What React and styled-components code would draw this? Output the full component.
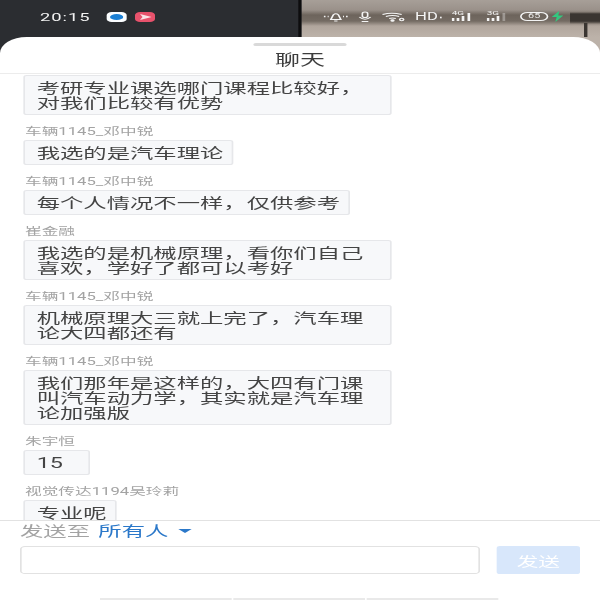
import styled, { createGlobalStyle } from "styled-components";

const GlobalStyle = createGlobalStyle`
  html, body {
    margin: 0;
    padding: 0;
    background: #fff;
    overflow: hidden;
  }
  * {
    box-sizing: border-box;
  }
`;

// the whole screenshot is a 360 wide phone screen stretched to 600
const Phone = styled.div`
  width: 360px;
  height: 600px;
  display: flex;
  flex-direction: column;
  transform: scaleX(1.6667);
  transform-origin: 0 0;
  filter: blur(0.4px);
  background: #2b2d31;
  font-family: "Roboto", "Noto Sans CJK SC", sans-serif;
  overflow: hidden;
`;

const StatusBar = styled.header`
  display: grid;
  grid-template-columns: 179px 2px 1fr;
  height: 53px;
  margin-bottom: -16px;
  flex: none;
`;

const StatusLeft = styled.div`
  display: flex;
  align-items: flex-start;
  padding: 11px 0 0 24px;
  background: #2b2d31;
  color: #f2f2f2;
`;

const Time = styled.span`
  font-size: 11px;
  line-height: 13px;
  letter-spacing: 0.6px;
  width: 40px;
`;

const AppBadge = styled.span`
  width: 12px;
  height: 10px;
  margin-top: 1px;
  margin-right: 5px;
  border-radius: 3px;
  background: ${(p) => p.$bg};
  display: flex;
  align-items: center;
  justify-content: center;
`;

const Divider = styled.div`
  background: #0d0d0e;
`;

const StatusRight = styled.div`
  display: flex;
  align-items: flex-start;
  gap: 6px;
  padding: 11px 0 0 13px;
  color: #f4f4f4;
  background:
    linear-gradient(90deg, transparent 0 46%, #3a3531 48% 56%, transparent 60%) right 23px / 18px 14px no-repeat,
    linear-gradient(180deg, transparent 0 12px, #3a3531 14px 21px, transparent 24px) right top / 18px 100% no-repeat,
    linear-gradient(180deg, #a79f98 0, #9a918a 10px, #6d645c 15px, #746b63 21px, #b1a69d 26px, #bcb2a9 37px);
`;

const HdText = styled.span`
  display: flex;
  align-items: center;
  gap: 1px;
  width: 16px;
  font-size: 10px;
  line-height: 12px;
`;

const Signal = styled.span`
  position: relative;
  display: block;
  width: 13px;
  height: 12px;
  & + & {
    margin-left: 2px;
  }
`;

const SignalLabel = styled.span`
  position: absolute;
  top: -1px;
  left: 0;
  font-size: 6px;
  line-height: 6px;
`;

const Battery = styled.span`
  width: 17px;
  height: 9px;
  margin-top: 1px;
  margin-left: 1px;
  border: 1px solid #f4f4f4;
  border-radius: 5px;
  font-size: 6.5px;
  line-height: 7px;
  text-align: center;
  color: #eee;
`;

const Sheet = styled.main`
  flex: 1;
  min-height: 0;
  display: flex;
  flex-direction: column;
  background: #fff;
  border-radius: 16px 16px 0 0;
  position: relative;
`;

const Handle = styled.div`
  position: absolute;
  top: 6px;
  left: 152px;
  width: 56px;
  height: 3px;
  border-radius: 2px;
  background: #d9d9d9;
`;

const Title = styled.h1`
  flex: none;
  height: 37px;
  margin: 0;
  padding-top: 14px;
  border-bottom: 1px solid #ececec;
  font-size: 15px;
  font-weight: 400;
  line-height: 19px;
  text-align: center;
  color: #3d3d3d;
`;

const Messages = styled.section`
  flex: 1;
  min-height: 0;
  overflow: hidden;
  padding: 1px 0 0 14px;
  border-bottom: 1px solid #e2e2e2;
`;

const Name = styled.div`
  margin: 11px 0 2px 1px;
  font-size: 10px;
  line-height: 12px;
  color: #a3a3a3;
`;

const Bubble = styled.div`
  width: fit-content;
  max-width: 221px;
  min-width: 40px;
  padding: 5px 5px 3px 7px;
  background: #f7f8fa;
  border: 1px solid #e6e7ea;
  border-radius: 2px;
  font-size: 14px;
  line-height: 15px;
  color: #444;
`;

const Footer = styled.footer`
  flex: none;
  height: 79px;
  padding: 1px 12px 0;
  display: flex;
  flex-direction: column;
  position: relative;
`;

const Target = styled.div`
  display: flex;
  align-items: center;
  height: 18px;
  font-size: 14px;
  line-height: 18px;
  color: #a3a3a3;
`;

const TargetName = styled.span`
  margin-left: 5px;
  color: #2b78c9;
`;

const Caret = styled.span`
  width: 0;
  height: 0;
  margin-left: 6px;
  border-left: 4px solid transparent;
  border-right: 4px solid transparent;
  border-top: 4px solid #2b78c9;
`;

const InputRow = styled.div`
  display: flex;
  margin-top: 6px;
  gap: 10px;
`;

const Input = styled.input`
  width: 276px;
  height: 28px;
  padding: 0 6px;
  border: 1px solid #e2e2e2;
  border-radius: 3px;
  background: #fff;
  outline: none;
`;

const SendButton = styled.button`
  width: 50px;
  height: 28px;
  padding: 0;
  border: none;
  border-radius: 2px;
  background: #d8e7fb;
  color: #fff;
  font-family: inherit;
  font-size: 13px;
`;

const Tabs = styled.div`
  position: absolute;
  left: 60px;
  bottom: 0;
  display: flex;
  gap: 1px;
`;

const Tab = styled.span`
  width: 79px;
  height: 2px;
  background: #e9e9e9;
`;

const messages = [
  { text: "考研专业课选哪门课程比较好，对我们比较有优势" },
  { name: "车辆1145_邓中锐", text: "我选的是汽车理论" },
  { name: "车辆1145_邓中锐", text: "每个人情况不一样，仅供参考" },
  { name: "崔金融", text: "我选的是机械原理，看你们自己喜欢，学好了都可以考好" },
  { name: "车辆1145_邓中锐", text: "机械原理大三就上完了，汽车理论大四都还有" },
  { name: "车辆1145_邓中锐", text: "我们那年是这样的，大四有门课叫汽车动力学，其实就是汽车理论加强版" },
  { name: "朱宇恒", text: "15" },
  { name: "视觉传达1194吴玲莉", text: "专业呢" },
];

function BellOff() {
  return (
    <svg width="15" height="12" viewBox="0 0 15 12" fill="none" stroke="currentColor">
      <path d="M4.5 8.5 L6 3.8 Q7.5 1.5 9 3.8 L10.5 8.5 Z M6.5 10 H8.5" strokeWidth="1" />
      <path d="M0.3 5.5h1M2.6 5.5h.6M11.8 5.5h.6M13.6 5.5h1" strokeWidth="1.3" />
    </svg>
  );
}

function Mic() {
  return (
    <svg width="8" height="12" viewBox="0 0 8 12" fill="none" stroke="currentColor" strokeWidth="1">
      <rect x="2.4" y="1" width="3.2" height="5.5" rx="1.6" />
      <path d="M0.6 6 Q4 10.5 7.4 6 M2 10.5 H6" />
    </svg>
  );
}

function Wifi() {
  return (
    <svg width="14" height="12" viewBox="0 0 14 12" fill="none" stroke="currentColor" strokeWidth="1">
      <path d="M0.5 3.5 Q6 1 12 3.5 M2.5 5.5 Q6.5 3.5 10.5 5.5 M4.5 7.5 Q6.5 6.5 8.5 7.5" />
      <circle cx="6.5" cy="9.5" r="0.8" fill="currentColor" />
      <circle cx="12" cy="8.5" r="1.2" />
    </svg>
  );
}

function Bars({ active }) {
  return (
    <svg width="13" height="12" viewBox="0 0 13 12" fill="currentColor" style={{ position: "absolute", left: 0, top: 0 }}>
      <rect x="0" y="7" width="1.6" height="3" />
      <rect x="3" y="7" width="1.6" height="3" />
      <rect x="6" y="5" width="1.6" height="5" />
      <rect x="9.5" y="2" width="1.6" height="8" opacity={active ? 1 : 0.35} />
    </svg>
  );
}

function Bolt() {
  return (
    <svg width="7" height="11" viewBox="0 0 7 11" fill="#33c77f" style={{ marginLeft: -4 }}>
      <path d="M4.5 0 L0 6 H3 L2.2 11 L7 4.5 H4 Z" />
    </svg>
  );
}

export default function App() {
  return (
    <>
      <GlobalStyle />
      <Phone>
        <StatusBar>
          <StatusLeft>
            <Time>20:15</Time>
            <AppBadge $bg="#fbfdff">
              <svg width="8" height="6" viewBox="0 0 8 6">
                <ellipse cx="4" cy="3" rx="4" ry="3" fill="#1b7fd4" />
              </svg>
            </AppBadge>
            <AppBadge $bg="#e8526c">
              <svg width="7" height="6" viewBox="0 0 7 6">
                <path d="M0 0 L7 3 L0 6 L1.5 3 Z" fill="#fbe3e7" />
              </svg>
            </AppBadge>
          </StatusLeft>
          <Divider />
          <StatusRight>
            <BellOff />
            <Mic />
            <Wifi />
            <HdText>
              HD
              <svg width="4" height="5" viewBox="0 0 4 5">
                <rect width="4" height="5" fill="currentColor" />
              </svg>
            </HdText>
            <Signal>
              <SignalLabel>4G</SignalLabel>
              <Bars active />
            </Signal>
            <Signal>
              <SignalLabel>3G</SignalLabel>
              <Bars />
            </Signal>
            <Battery>65</Battery>
            <Bolt />
          </StatusRight>
        </StatusBar>
        <Sheet>
          <Handle />
          <Title>聊天</Title>
          <Messages>
            {messages.map((m, i) => (
              <div key={i}>
                {m.name && <Name>{m.name}</Name>}
                <Bubble>{m.text}</Bubble>
              </div>
            ))}
          </Messages>
          <Footer>
            <Target>
              发送至
              <TargetName>所有人</TargetName>
              <Caret />
            </Target>
            <InputRow>
              <Input />
              <SendButton>发送</SendButton>
            </InputRow>
            <Tabs>
              <Tab />
              <Tab />
              <Tab />
            </Tabs>
          </Footer>
        </Sheet>
      </Phone>
    </>
  );
}
